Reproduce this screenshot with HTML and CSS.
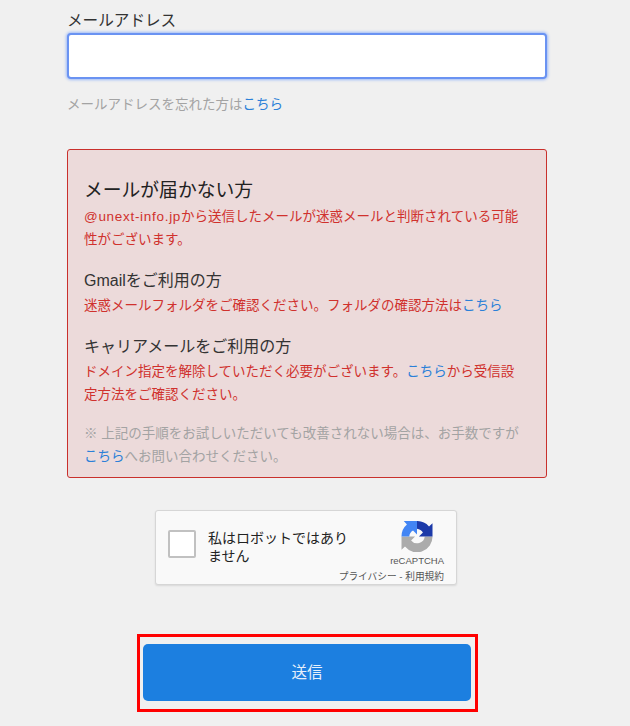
FILE: index.html
```html
<!DOCTYPE html>
<html lang="ja">
<head>
    <meta charset="UTF-8">
    <meta name="viewport" content="width=device-width, initial-scale=1.0">
    <title>メールアドレス</title>
    <link rel="stylesheet" href="styles.css">
</head>
<body>
    <main class="form-container">
        <!-- Email -->
        <label class="field-label" for="email">メールアドレス</label>
        <input class="field-input" type="email" id="email">
        <p class="forgot">メールアドレスを忘れた方は<a href="#">こちら</a></p>

        <!-- Notice -->
        <section class="notice">
            <h2 class="notice-title">メールが届かない方</h2>
            <p class="notice-text"><span class="latin">@unext-info.jp</span>から送信したメールが迷惑メールと判断されている可能性がございます。</p>
            <h3 class="notice-heading">Gmailをご利用の方</h3>
            <p class="notice-text">迷惑メールフォルダをご確認ください。フォルダの確認方法は<a href="#">こちら</a></p>
            <h3 class="notice-heading">キャリアメールをご利用の方</h3>
            <p class="notice-text">ドメイン指定を解除していただく必要がございます。<a href="#">こちら</a>から受信設定方法をご確認ください。</p>
            <p class="notice-note">※ 上記の手順をお試しいただいても改善されない場合は、お手数ですが<a href="#">こちら</a>へお問い合わせください。</p>
        </section>

        <!-- reCAPTCHA -->
        <div class="captcha">
            <span class="captcha-check"></span>
            <span class="captcha-label">私はロボットではありません</span>
            <div class="captcha-brand">
                <svg class="captcha-logo" viewBox="0 0 64 64" width="32" height="31">
                    <path fill="#ababab" d="M0 32H28L19.800 40.200A16 16 0 0 0 48 32H64A32 32 0 0 1 7.200 52.800L0 59.300Z"/>
                    <path fill="#1c3aa9" d="M32 0A32 32 0 0 1 56.800 11.200L64 4.700V32H36L44.200 23.800A16 16 0 0 0 32 16Z"/>
                    <path fill="#4285f4" d="M0 32A32 32 0 0 1 11.200 7.200L4.700 0H32V28L23.800 19.800A16 16 0 0 0 16 32Z"/>
                </svg>
                <span class="captcha-name">reCAPTCHA</span>
                <span class="captcha-links">プライバシー - 利用規約</span>
            </div>
        </div>

        <!-- Submit -->
        <div class="submit-frame">
            <button class="submit-button" type="button">送信</button>
        </div>
    </main>
</body>
</html>
```

FILE: styles.css
```css
/* Global Styles */
html,
body {
    margin: 0;
    padding: 0;
    height: 726px;
    overflow: hidden;
}

body {
    background-color: #f0f0f0;
    color: #333;
    font-family: "Liberation Sans", "Noto Sans CJK JP", sans-serif;
}

a {
    color: #2b80d8;
    text-decoration: none;
}

.form-container {
    width: 480px;
    margin-left: 67px;
    padding-top: 9px;
}

/* Email */
.field-label {
    display: block;
    font-size: 15.600px;
    line-height: 23px;
}

.field-input {
    display: block;
    box-sizing: border-box;
    width: 480px;
    height: 46px;
    margin-top: 1px;
    border: 2px solid #6a93f2;
    border-radius: 4px;
    background-color: #fff;
    box-shadow: 0 0 3px 1px #9dbaf8;
    outline: none;
}

.forgot {
    margin: 16px 0 0;
    font-size: 13.500px;
    line-height: 19px;
    color: #a3a3a3;
}

/* Notice */
.notice {
    box-sizing: border-box;
    height: 329px;
    margin-top: 35px;
    padding: 28px 20px 0 16px;
    background-color: #ecdada;
    border: 1px solid #c9302c;
    border-radius: 3px;
}

.notice-title {
    margin: 0;
    font-size: 18.800px;
    font-weight: normal;
    line-height: 26px;
    color: #222;
}

.notice-heading {
    margin: 18px 0 0;
    font-size: 16px;
    font-weight: normal;
    line-height: 24px;
    color: #333;
}

.notice-text {
    margin: 1px 0 0;
    font-size: 13.500px;
    line-height: 23px;
    color: #d0312d;
}

.latin {
    letter-spacing: 0.700px;
}

.notice-note {
    margin: 16px 0 0;
    font-size: 13.500px;
    line-height: 23px;
    color: #a3a3a3;
}

/* reCAPTCHA */
.captcha {
    position: relative;
    box-sizing: border-box;
    display: flex;
    align-items: flex-start;
    width: 302px;
    height: 75px;
    margin: 32px 0 0 88px;
    padding: 19px 0 0 12px;
    background-color: #f9f9f9;
    border: 1px solid #d6d6d6;
    border-radius: 3px;
    box-shadow: 0 1px 2px rgba(0, 0, 0, 0.1);
}

.captcha-check {
    flex: none;
    box-sizing: border-box;
    width: 28px;
    height: 28px;
    background-color: #fff;
    border: 2px solid #c1c1c1;
    border-radius: 2px;
}

.captcha-label {
    width: 146px;
    margin: -1px 0 0 12px;
    font-size: 14px;
    line-height: 18px;
    color: #222;
}

.captcha-brand {
    position: absolute;
    top: 10px;
    right: 12px;
    display: flex;
    flex-direction: column;
    align-items: flex-end;
}

.captcha-logo {
    margin-right: 11px;
}

.captcha-name {
    margin-top: 2px;
    font-size: 9.500px;
    line-height: 14px;
    color: #555;
}

.captcha-links {
    margin-top: 2px;
    font-size: 9.700px;
    line-height: 14px;
    color: #555;
    white-space: nowrap;
}

/* Submit */
.submit-frame {
    box-sizing: border-box;
    width: 341px;
    height: 78px;
    margin: 49px 0 0 70px;
    padding: 7px 4px 8px 3px;
    border: 3px solid #f00;
}

.submit-button {
    display: block;
    width: 328px;
    height: 57px;
    padding: 0 0 3px;
    background-color: #1c7fe0;
    color: #e6f0fb;
    font-family: inherit;
    font-size: 15.500px;
    border: none;
    border-radius: 5px;
}
```
